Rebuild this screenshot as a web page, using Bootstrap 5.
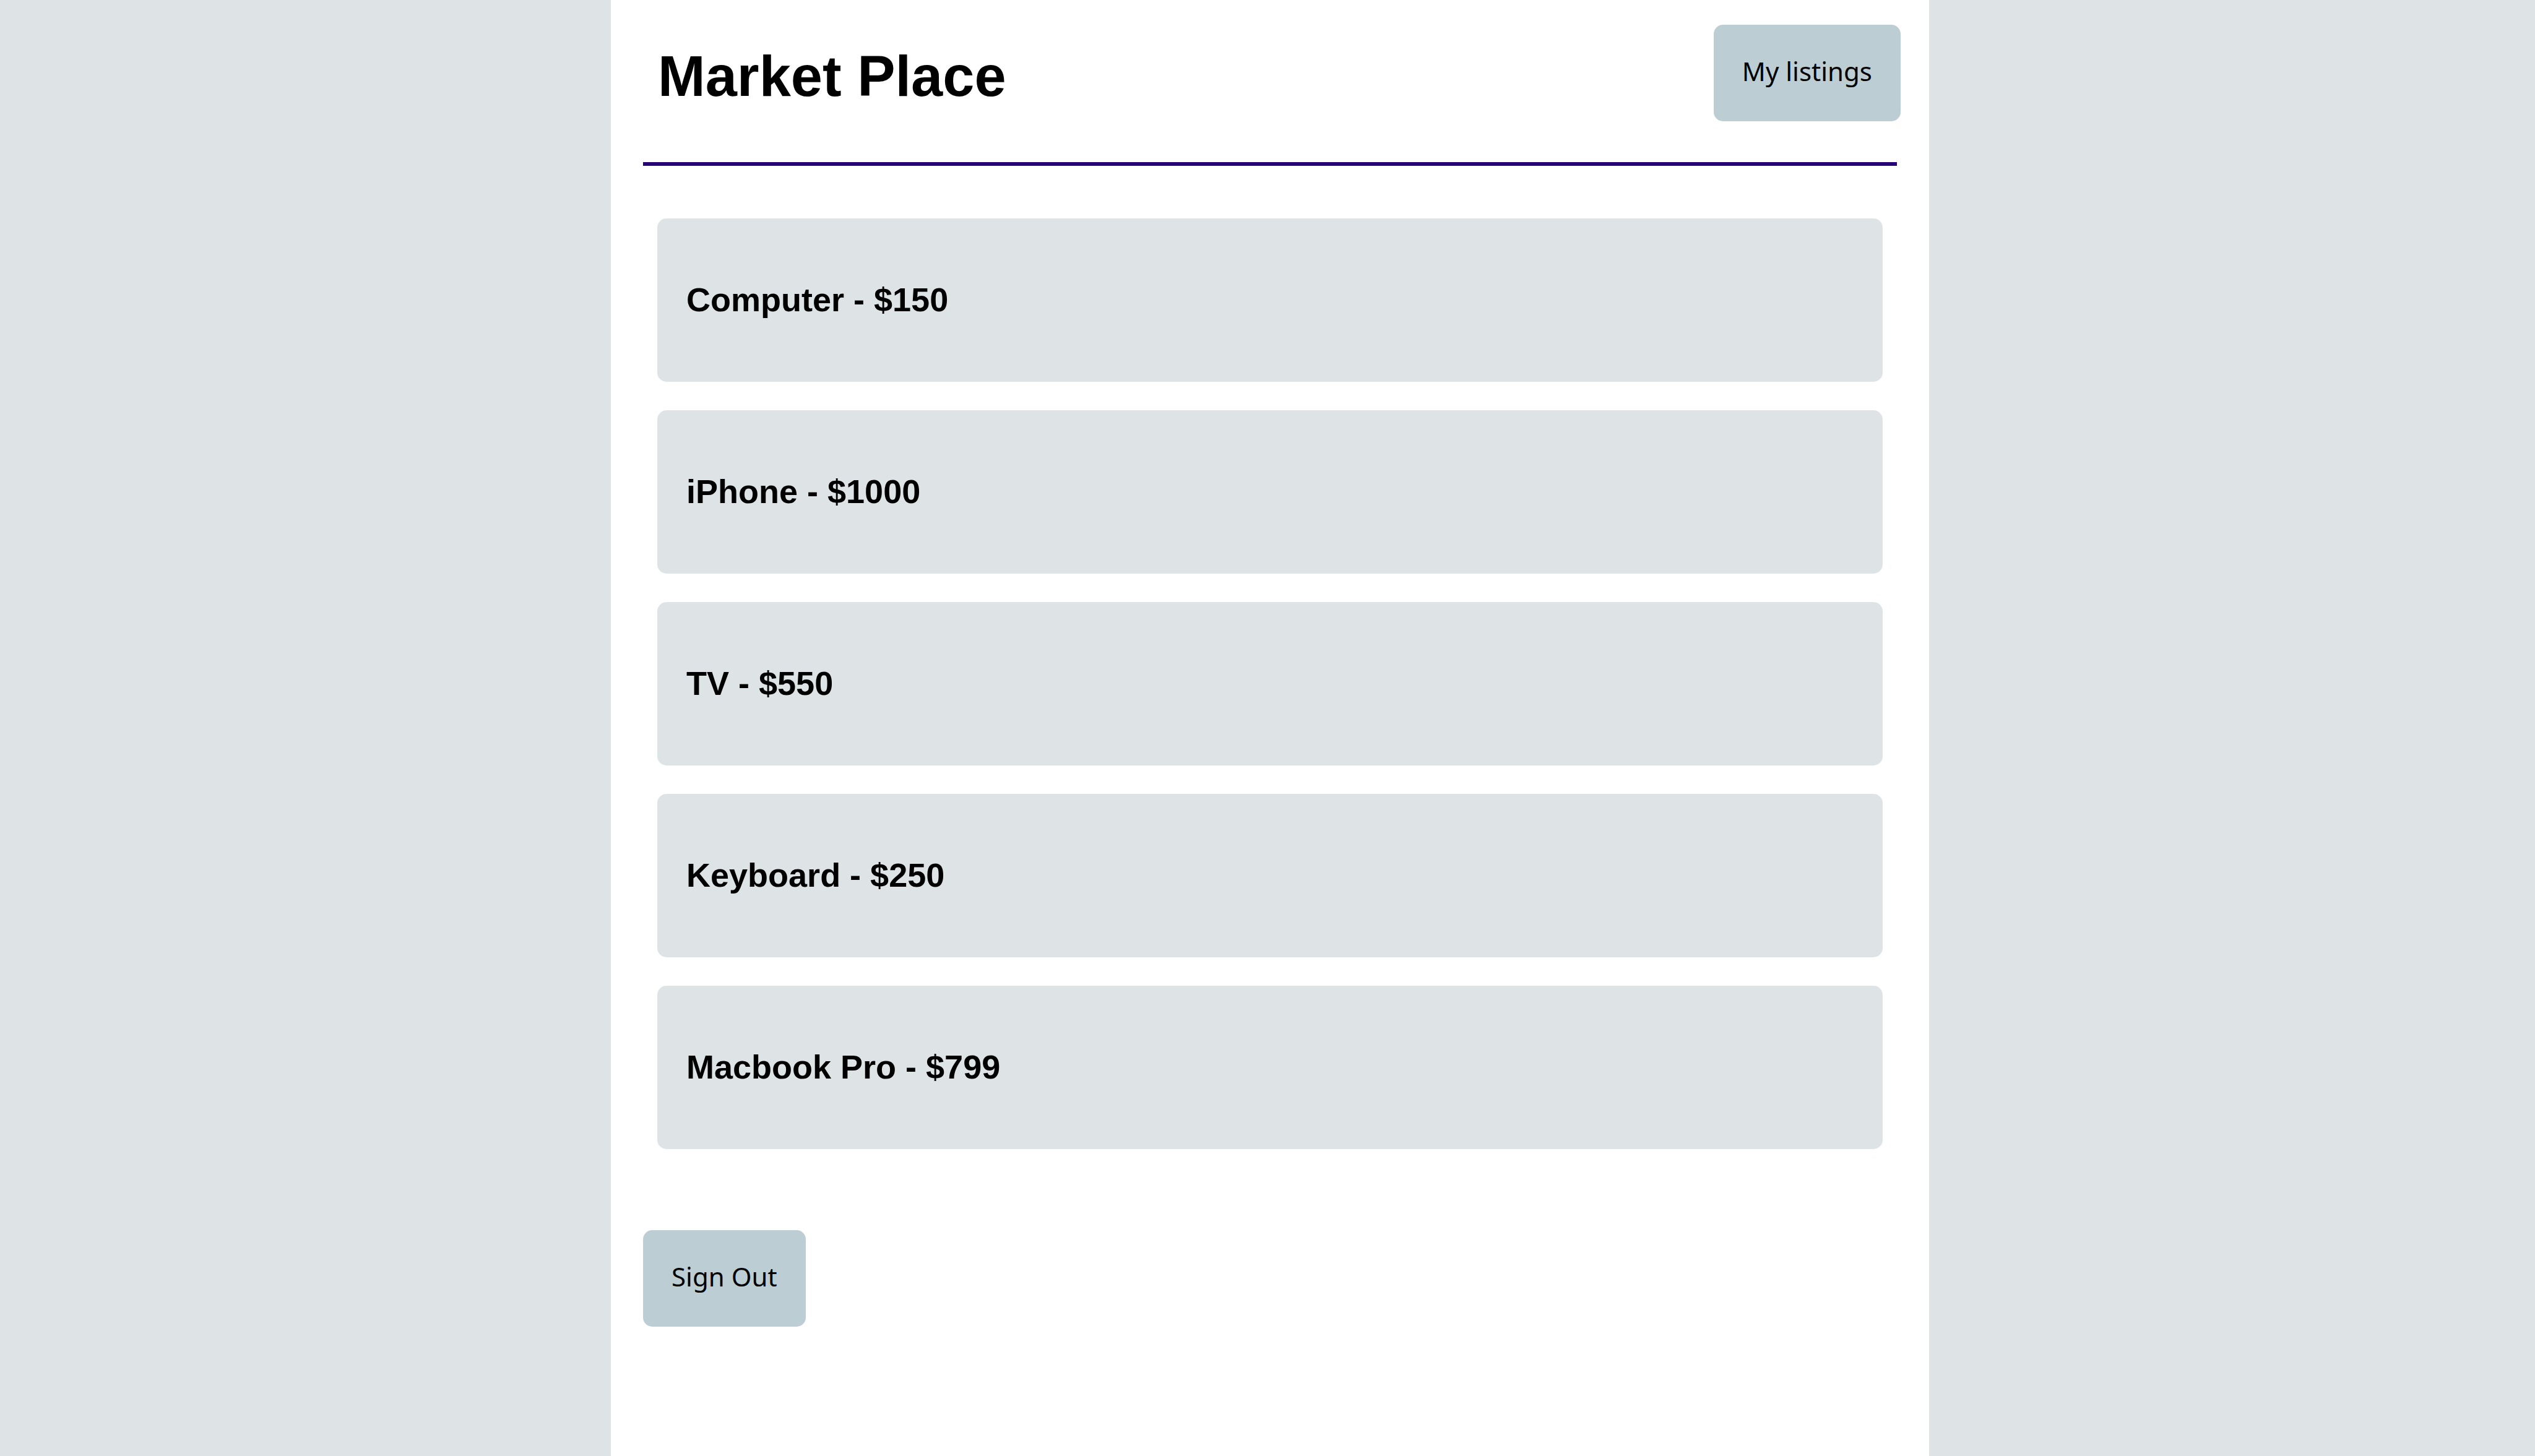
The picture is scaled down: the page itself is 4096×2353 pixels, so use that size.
<!DOCTYPE html>
<html lang="en">
<head>
<meta charset="utf-8">
<meta name="viewport" content="width=device-width, initial-scale=1">
<title>Market Place</title>
<link href="https://cdn.jsdelivr.net/npm/bootstrap@5.3.0/dist/css/bootstrap.min.css" rel="stylesheet">
<style>
  body {
    background: #dee3e5;
    color: #000;
    font-family: "Liberation Sans", Arial, sans-serif;
    padding-left: 8px;
  }
  .market-panel { width: 52vw; padding: 40px 52px; }
  .market-header { padding: 0 0 66px 24px; border-bottom: 6px solid #260077; }
  .market-title { font-size: 92px; line-height: 104px; margin-top: 31px; }
  .market-btn {
    --bs-btn-color: #000;
    --bs-btn-bg: #bccdd3;
    --bs-btn-hover-color: #000;
    --bs-btn-hover-bg: #a9bec6;
    --bs-btn-active-bg: #9bb2bb;
    --bs-btn-border-width: 0;
    --bs-btn-border-radius: 15px;
    font-family: "Noto Sans", sans-serif;
    font-size: 42px;
    line-height: 60px;
    padding: 45px 46px 51px;
  }
  .market-header .market-btn { margin-right: -6px; }
  .market-list { gap: 46px; margin: 85px 23px 131px; }
  .market-item { background: #dee3e5; border-radius: 15px; padding: 101px 47px 103px; }
  .market-item h2 { font-size: 54px; line-height: 60px; }
</style>
<script src="https://cdn.jsdelivr.net/npm/bootstrap@5.3.0/dist/js/bootstrap.bundle.min.js" defer></script>
</head>
<body>
<main class="market-panel bg-white min-vh-100 mx-auto">
  <header class="market-header d-flex justify-content-between align-items-start">
    <h1 class="market-title fw-bold mb-0">Market Place</h1>
    <button type="button" class="btn market-btn">My listings</button>
  </header>
  <ul class="market-list list-unstyled d-flex flex-column">
    <li class="market-item"><h2 class="fw-bold mb-0">Computer - $150</h2></li>
    <li class="market-item"><h2 class="fw-bold mb-0">iPhone - $1000</h2></li>
    <li class="market-item"><h2 class="fw-bold mb-0">TV - $550</h2></li>
    <li class="market-item"><h2 class="fw-bold mb-0">Keyboard - $250</h2></li>
    <li class="market-item"><h2 class="fw-bold mb-0">Macbook Pro - $799</h2></li>
  </ul>
  <button type="button" class="btn market-btn">Sign Out</button>
</main>
</body>
</html>
